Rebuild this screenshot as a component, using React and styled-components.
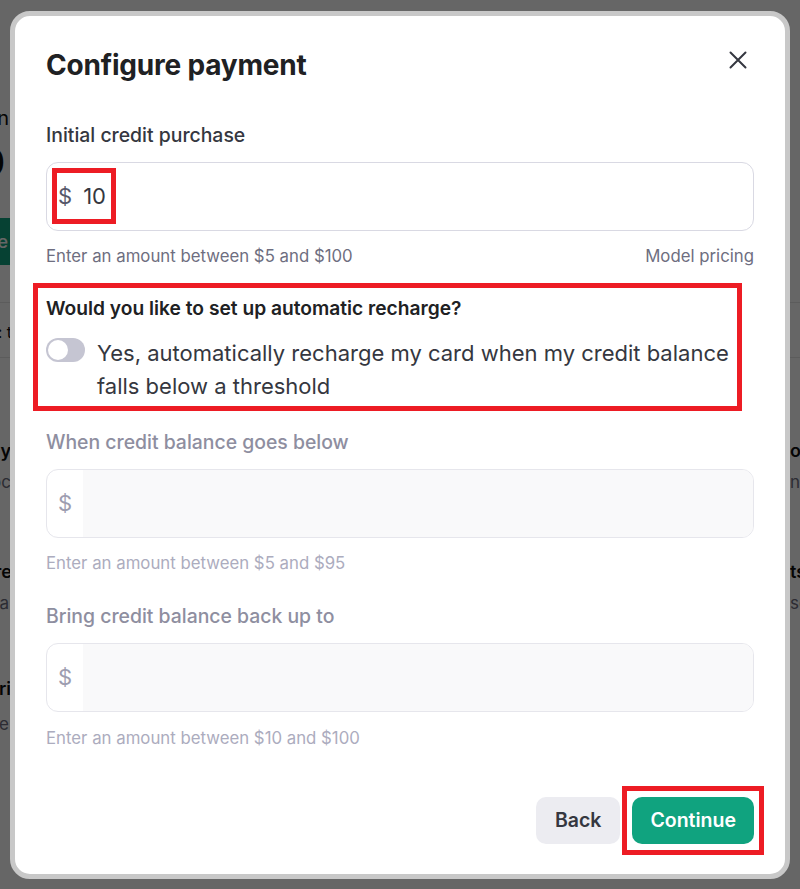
import styled, { createGlobalStyle } from "styled-components";

const GlobalStyle = createGlobalStyle`
  * { box-sizing: border-box; }
  html, body { margin: 0; padding: 0; }
  body {
    font-family: Inter, "Noto Sans", sans-serif;
    background: #fff;
    color: #0d0d0d;
    overflow: hidden;
  }
`;

// page behind the dialog, only its edges peek out
const BgPage = styled.div`
  width: 100%;
  height: 889px;
  display: flex;
  flex-direction: column;
`;

const BgRow = styled.div`
  display: flex;
  justify-content: space-between;
  align-items: center;
  height: ${(p) => p.$h}px;
  margin-top: ${(p) => p.$mt || 0}px;
`;

const Peek = styled.div`
  display: flex;
  justify-content: ${(p) => (p.$right ? "flex-start" : "flex-end")};
  align-items: center;
  width: ${(p) => p.$w}px;
  height: 100%;
  flex-shrink: 0;
  overflow: hidden;
  white-space: nowrap;
  font-size: ${(p) => p.$size || 18}px;
  font-weight: ${(p) => (p.$bold ? 600 : 400)};
  color: ${(p) => (p.$muted ? "#6e6e80" : "#0d0d0d")};
`;

const BgButton = styled.div`
  flex-shrink: 0;
  display: flex;
  align-items: center;
  height: 100%;
  padding: 0 22px 0 16px;
  border-radius: 6px;
  background: #10a37f;
  color: #fff;
  font-size: 18px;
  font-weight: 500;
`;

const BgRule = styled.div`
  height: 1px;
  background: #e5e5e5;
  margin-top: ${(p) => p.$mt}px;
`;

const Overlay = styled.div`
  position: fixed;
  inset: 0;
  background: rgba(0, 0, 0, 0.6);
  display: flex;
  align-items: center;
  justify-content: center;
`;

const Dialog = styled.div`
  width: 780px;
  background: #fff;
  border: 5px solid #c8c8c8;
  border-radius: 20px;
  padding: 31px 31px 30px;
  display: flex;
  flex-direction: column;
`;

const Header = styled.div`
  display: flex;
  justify-content: space-between;
  align-items: flex-start;
  height: 36px;
`;

const Title = styled.h2`
  margin: 0;
  font-size: 28px;
  line-height: 36px;
  font-weight: 700;
  color: #202123;
  letter-spacing: -0.2px;
`;

const CloseButton = styled.button`
  display: flex;
  width: 24px;
  height: 24px;
  margin: 1px 4px 0 0;
  padding: 0;
  border: 0;
  background: none;
  color: #353740;
  cursor: pointer;
`;

const Label = styled.div`
  margin-top: ${(p) => p.$mt}px;
  padding-bottom: 2px;
  font-size: 19.4px;
  line-height: 22px;
  font-weight: 500;
  color: ${(p) => (p.$disabled ? "#8e8ea0" : "#353740")};
`;

const InputBox = styled.div`
  display: flex;
  align-items: stretch;
  height: 69px;
  margin-top: 14px;
  border: 1px solid ${(p) => (p.$disabled ? "#e6e6ec" : "#d9d9e3")};
  border-radius: 12px;
  overflow: hidden;
  background: #fff;
`;

const Prefix = styled.div`
  width: 36px;
  display: flex;
  align-items: center;
  justify-content: center;
  font-size: 22px;
  color: ${(p) => (p.$disabled ? "#9d9db0" : "#565869")};
`;

const Field = styled.div`
  flex: 1;
  background: ${(p) => (p.$disabled ? "#f9f9fa" : "#fff")};
`;

const Marked = styled.div`
  align-self: center;
  display: flex;
  align-items: center;
  gap: 11px;
  height: 56px;
  margin-left: 5px;
  padding: 0 5px 0 1px;
  border: 5px solid #ed1c24;
  font-size: 22px;
`;

const Dollar = styled.span`
  color: #565869;
`;

const Amount = styled.span`
  color: #353740;
`;

const HelpRow = styled.div`
  display: flex;
  justify-content: space-between;
  margin-top: ${(p) => p.$mt || 14}px;
  font-size: 16.8px;
  line-height: 22px;
  color: ${(p) => (p.$disabled ? "#acacbe" : "#6e6e80")};
`;

const RechargeBox = styled.div`
  margin: 16px 12px 0 -13px;
  padding: 8px 0 3px 8px;
  border: 5px solid #ed1c24;
`;

const Question = styled.div`
  font-size: 19.2px;
  line-height: 24px;
  font-weight: 600;
  color: #202123;
`;

const ToggleRow = styled.label`
  display: flex;
  align-items: flex-start;
  gap: 12px;
  margin-top: 17px;
  cursor: pointer;
`;

const Switch = styled.span`
  flex-shrink: 0;
  display: flex;
  align-items: center;
  width: 39px;
  height: 24px;
  margin-top: 1px;
  padding: 2px;
  border-radius: 12px;
  background: #c5c5d2;

  &::before {
    content: "";
    width: 20px;
    height: 20px;
    border-radius: 50%;
    background: #fff;
  }
`;

const ToggleText = styled.span`
  font-size: 22px;
  line-height: 33px;
  color: #353740;
  white-space: nowrap;
`;

const Footer = styled.div`
  display: flex;
  justify-content: flex-end;
  gap: 12px;
  margin-top: 48px;
`;

const Button = styled.button`
  height: 47px;
  padding: 0 ${(p) => (p.$primary ? 18 : 19)}px;
  border: 0;
  border-radius: 10px;
  font-family: inherit;
  font-size: 19.5px;
  font-weight: 600;
  background: ${(p) => (p.$primary ? "#10a37f" : "#ececf1")};
  color: ${(p) => (p.$primary ? "#fff" : "#353740")};
  cursor: pointer;
`;

const ButtonMark = styled.div`
  display: flex;
  margin: -11px -10px;
  padding: 6px 5px;
  border: 5px solid #ed1c24;
`;

function AmountInput({ disabled }) {
  return (
    <InputBox $disabled={disabled}>
      <Prefix $disabled={disabled}>$</Prefix>
      <Field $disabled={disabled} />
    </InputBox>
  );
}

function Background() {
  return (
    <BgPage>
      <BgRow $h={24} $mt={106}>
        <Peek $w={9} $size={20}>Current plan</Peek>
      </BgRow>
      <BgRow $h={40} $mt={12}>
        <Peek $w={5} $size={38} $bold>$0.00</Peek>
      </BgRow>
      <BgRow $h={47} $mt={36}>
        <Peek $w={30}>
          <BgButton>Add to credit balance</BgButton>
        </Peek>
      </BgRow>
      <BgRule $mt={37} />
      <BgRow $h={18} $mt={20}>
        <Peek $w={12} $size={16}>Overview: t</Peek>
      </BgRow>
      <BgRule $mt={16} />
      <BgRow $h={24} $mt={80}>
        <Peek $w={11} $bold>Monthly pay</Peek>
        <Peek $w={10} $right $bold>organization</Peek>
      </BgRow>
      <BgRow $h={22} $mt={9}>
        <Peek $w={20} $size={17} $muted>Read the docs</Peek>
        <Peek $w={10} $right $size={17} $muted>nce per month</Peek>
      </BgRow>
      <BgRow $h={24} $mt={66}>
        <Peek $w={12} $bold>Usage are</Peek>
        <Peek $w={10} $right $bold>ts and alerts</Peek>
      </BgRow>
      <BgRow $h={22} $mt={9}>
        <Peek $w={9} $size={17} $muted>See usage data</Peek>
        <Peek $w={10} $right $size={17} $muted>set limits</Peek>
      </BgRow>
      <BgRow $h={24} $mt={62}>
        <Peek $w={11} $bold>Pri</Peek>
      </BgRow>
      <BgRow $h={22} $mt={13}>
        <Peek $w={9} $size={17} $muted>View the</Peek>
      </BgRow>
    </BgPage>
  );
}

export default function App() {
  return (
    <>
      <GlobalStyle />
      <Background />
      <Overlay>
        <Dialog>
          <Header>
            <Title>Configure payment</Title>
            <CloseButton aria-label="Close">
              <svg width="24" height="24" viewBox="0 0 24 24" fill="none">
                <path
                  d="M4.5 4.5L19.5 19.5M19.5 4.5L4.5 19.5"
                  stroke="currentColor"
                  strokeWidth="2"
                  strokeLinecap="round"
                />
              </svg>
            </CloseButton>
          </Header>

          <Label $mt={41}>Initial credit purchase</Label>
          <InputBox>
            <Marked>
              <Dollar>$</Dollar>
              <Amount>10</Amount>
            </Marked>
          </InputBox>
          <HelpRow>
            <span>Enter an amount between $5 and $100</span>
            <span>Model pricing</span>
          </HelpRow>

          <RechargeBox>
            <Question>Would you like to set up automatic recharge?</Question>
            <ToggleRow>
              <Switch />
              <ToggleText>
                Yes, automatically recharge my card when my credit balance
                <br />
                falls below a threshold
              </ToggleText>
            </ToggleRow>
          </RechargeBox>

          <Label $mt={20} $disabled>
            When credit balance goes below
          </Label>
          <AmountInput disabled />
          <HelpRow $disabled>Enter an amount between $5 and $95</HelpRow>

          <Label $mt={31} $disabled>
            Bring credit balance back up to
          </Label>
          <AmountInput disabled />
          <HelpRow $disabled $mt={15}>
            Enter an amount between $10 and $100
          </HelpRow>

          <Footer>
            <Button>Back</Button>
            <ButtonMark>
              <Button $primary>Continue</Button>
            </ButtonMark>
          </Footer>
        </Dialog>
      </Overlay>
    </>
  );
}
